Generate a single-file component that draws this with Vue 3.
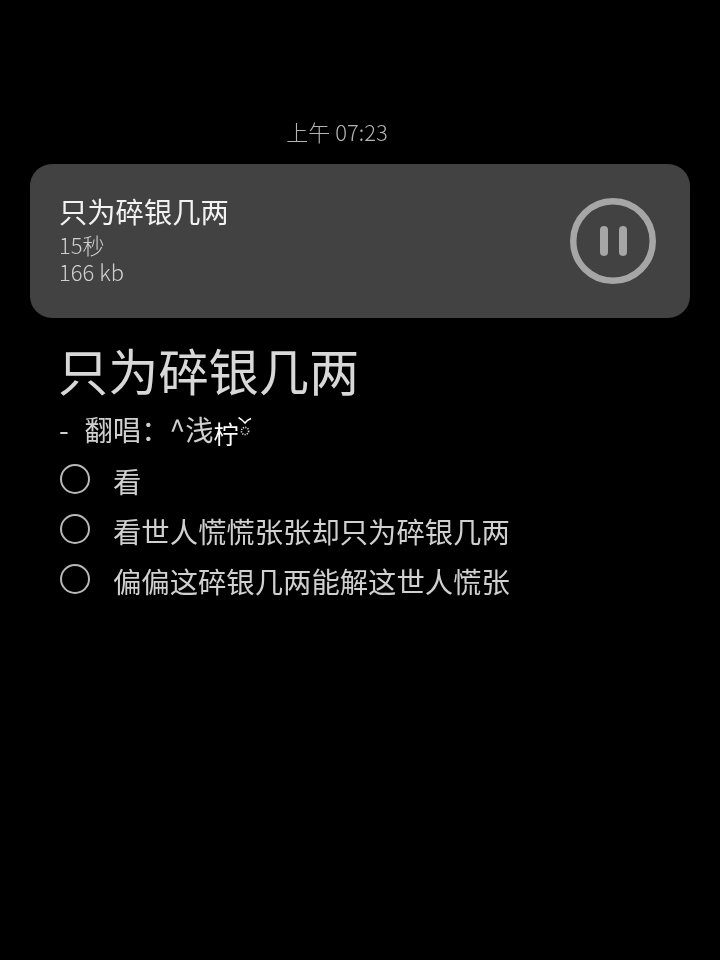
<template>
  <main class="page">
    <div class="time">上午 07:23</div>
    <section class="card">
      <div class="info">
        <div class="title">只为碎银几两</div>
        <div class="meta">15秒</div>
        <div class="meta">166 kb</div>
      </div>
      <svg class="pause" width="88" height="88" viewBox="0 0 88 88" aria-label="pause">
        <circle cx="44" cy="44" r="39.75" fill="none" stroke="#a6a6a6" stroke-width="6.5" />
        <rect x="31" y="29" width="8" height="30" rx="4" fill="#a6a6a6" />
        <rect x="50" y="29" width="8" height="30" rx="4" fill="#a6a6a6" />
      </svg>
    </section>
    <article class="body">
      <h1 class="heading">只为碎银几两</h1>
      <div class="credit">
        <span class="dash">-</span><span>翻唱：^浅</span><span class="bright">柠</span>
        <svg class="mark" width="14" height="20" viewBox="0 0 14 20">
          <path d="M0.5 0.5 Q4 2.5 7 6 Q9 3 13 1.5" fill="none" stroke="#fff" stroke-width="1.5" />
          <circle cx="7" cy="14" r="3.6" fill="none" stroke="#e0e0e0" stroke-width="1.6" stroke-dasharray="1.2 1.2" />
        </svg>
      </div>
      <ul class="list">
        <li v-for="line in lines" :key="line" class="row">
          <span class="radio"></span>
          <span class="text">{{ line }}</span>
        </li>
      </ul>
    </article>
  </main>
</template>

<script setup>
const lines = ['看', '看世人慌慌张张却只为碎银几两', '偏偏这碎银几两能解这世人慌张']
</script>

<style>
html, body { background: #000; margin: 0; }
</style>

<style scoped>
.page {
  width: 720px;
  height: 960px;
  background: #000;
  overflow: hidden;
  font-family: "Noto Sans CJK SC", "Noto Sans", sans-serif;
  font-weight: 400;
  padding-top: 114px;
  box-sizing: border-box;
}
.time {
  height: 36px;
  line-height: 34px;
  font-size: 22px;
  font-weight: 300;
  color: #b4b4b4;
  text-align: center;
  margin-left: -46px;
  will-change: transform;
}
.card {
  margin: 14px 30px 0;
  height: 154px;
  border-radius: 22px;
  background: #424242;
  display: flex;
  align-items: center;
  justify-content: space-between;
  padding: 0 30px 0 29px;
  box-sizing: border-box;
}
.info { display: flex; flex-direction: column; margin-top: -6px; will-change: transform; }
.title { font-size: 28.3px; line-height: 40px; color: #f2f2f2; }
.meta { font-size: 22px; line-height: 27px; font-weight: 300; color: #d0d0d0; }
.pause { margin-right: 3px; flex: none; }
.body { padding: 21px 60px 0 58px; color: #d0d0d0; will-change: transform; }
.heading {
  margin: 0;
  font-size: 50.2px;
  line-height: 60px;
  font-weight: 400;
  color: #d8d8d8;
}
.credit {
  display: flex;
  align-items: flex-start;
  height: 50px;
  font-size: 28.35px;
  line-height: 42px;
  margin-top: 9px;
  margin-left: 1px;
}
.dash { width: 25.5px; }
.bright { color: #fff; font-size: 25px; margin-top: 4px; }
.mark { margin-top: 9px; margin-left: -1px; }
.list { list-style: none; margin: 0; padding: 0 0 0 2px; }
.row { display: flex; height: 50px; align-items: flex-start; }
.radio {
  width: 30px;
  height: 30px;
  border: 2px solid #b8b8b8;
  border-radius: 50%;
  box-sizing: border-box;
  flex: none;
  margin-top: 6px;
}
.text { font-size: 28.35px; line-height: 42px; margin-left: 23px; margin-top: 2px; }
</style>
